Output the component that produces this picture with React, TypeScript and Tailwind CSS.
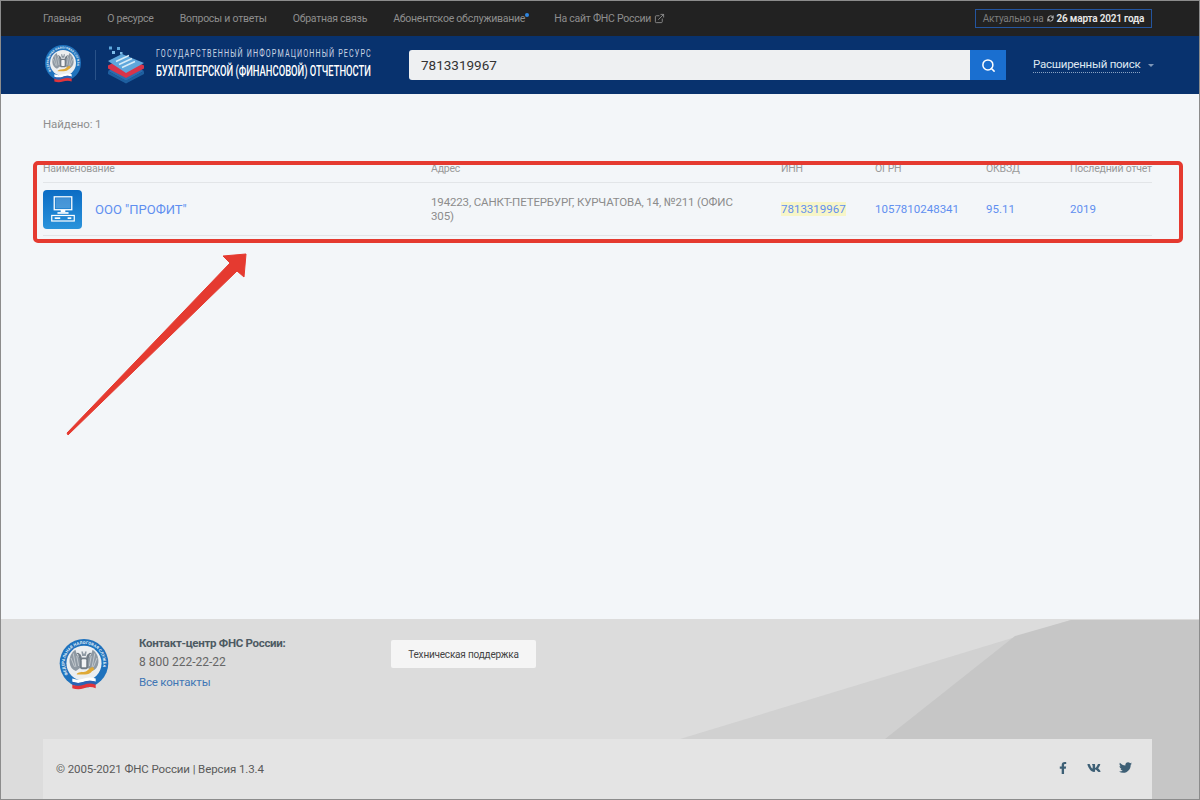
import React from "react";
import { ExternalLink, RefreshCw, Search } from "lucide-react";
import { FaFacebookF, FaTwitter, FaVk } from "react-icons/fa";

const NAV = ["Главная", "О ресурсе", "Вопросы и ответы", "Обратная связь"];

function Emblem({ size, id }: { size: number; id: string }) {
  return (
    <svg width={size} height={size} viewBox="0 0 60 60">
      <circle cx="30" cy="27" r="27" fill="#1f72bd" />
      <circle cx="30" cy="27" r="19.5" fill="#eceef0" />
      <path id={id} d="M12.4 39.3A21.5 21.5 0 1 1 47.6 39.3" fill="none" />
      <text fontFamily="Roboto, sans-serif" fontSize="4.4" fontWeight="700" fill="#e8f2fa" letterSpacing="0.2">
        <textPath href={`#${id}`}>ФЕДЕРАЛЬНАЯ НАЛОГОВАЯ СЛУЖБА</textPath>
      </text>
      {/* eagle */}
      <path d="M27 24C24 20 22 18 20.5 12C16 15 13.5 20 14 26C14.5 31 17 34 21 35.5L26 32Z" fill="#8f99a3" />
      <path d="M33 24C36 20 38 18 39.5 12C44 15 46.5 20 46 26C45.5 31 43 34 39 35.5L34 32Z" fill="#8f99a3" />
      <path d="M18 16l3 15M15.5 21l4 10M22 19l2 11M42 16l-3 15M44.5 21l-4 10M38 19l-2 11" stroke="#dfe2e5" strokeWidth="0.7" />
      <path d="M27.5 22c0-3-1-5-2.5-5.5-1-1.500-2.500-1.500-3.500 0l2 .5c0 2 1 4 2 6zM32.500 22c0-3 1-5 2.500-5.500 1-1.500 2.500-1.500 3.500 0l-2 .5c0 2-1 4-2 6z" fill="#737d87" />
      <path d="M27 14h2v2h2v-2h2l-1 5h-4z" fill="#8f99a3" />
      <rect x="25.500" y="20.500" width="9" height="13" rx="2" fill="#737d87" />
      <rect x="27.500" y="22.500" width="5" height="9" rx="1" fill="#f2f3f5" />
      <path d="M22 38.500c3-2.500 7-1.500 10-2.500 3-1.500 5-5 8-5l1.500 3c-2.500 1-3 3.500-6 4.500-3 1.200-9 1-13.500 1z" fill="#dfa937" />
      <path d="M17 44q6.500 2.500 13 0t13 0v3.500q-6.500-2.500-13 0t-13 0z" fill="#ffffff" />
      <path d="M17 47.500q6.500 2.500 13 0t13 0v3.200q-6.500-2.500-13 0t-13 0z" fill="#2c62b4" />
      <path d="M17 50.700q6.500 2.500 13 0t13 0v4q-6.500-2.500-13 0t-13 0z" fill="#e2343a" />
    </svg>
  );
}

function StackLogo() {
  return (
    <svg width="38" height="38" viewBox="0 0 38 38">
      <path d="M1 25l18-9 18 9-18 10z" fill="#2b6cae" />
      <path d="M1 28l18 9.500 18-9.500v-3l-18 9.500-18-9.500z" fill="#1e5f9f" />
      <path d="M1 19.500l18-9 18 9v3l-18 9.500-18-9.500z" fill="#d8344a" />
      <path d="M1 15l14-7 22 9-18 10z" fill="#5ea7dc" />
      <path d="M9 15.500l13-6M12 18.500l13-6M15 21.500l13-6" stroke="#d6ecf8" strokeWidth="1.400" />
      <rect x="2" y="0.500" width="3" height="3" fill="#5ea7dc" />
      <rect x="10" y="1" width="3" height="3" fill="#5ea7dc" />
      <rect x="5" y="5" width="3" height="3" fill="#7dbbe8" />
      <rect x="13" y="6" width="2.500" height="2.500" fill="#7dbbe8" />
    </svg>
  );
}

function ComputerIcon() {
  return (
    <div className="flex h-[39px] w-[39px] items-center justify-center rounded bg-gradient-to-b from-[#0b6cc4] to-[#2a93db]">
      <svg width="24" height="26" viewBox="0 0 26 28" fill="none">
        <rect x="3.500" y="0.800" width="19" height="14" stroke="#fff" strokeWidth="1.400" />
        <rect x="5" y="2.200" width="16" height="11" fill="#d7ecfa" fillOpacity="0.25" />
        <rect x="10.500" y="15" width="5" height="2.400" fill="#fff" />
        <rect x="7" y="17.400" width="12" height="1.800" fill="#fff" />
        <rect x="0.800" y="21" width="24.400" height="6" stroke="#fff" strokeWidth="1.300" />
        <rect x="4" y="23" width="6" height="1.800" fill="#fff" />
        <rect x="18" y="23" width="4" height="1.800" fill="#fff" />
      </svg>
    </div>
  );
}

function Annotation() {
  return (
    <>
      <div className="absolute left-[33px] top-[161px] h-[82px] w-[1150px] rounded-[5px] border-4 border-[#e53a30]" />
      <svg className="absolute left-0 top-0" width="1200" height="800" viewBox="0 0 1200 800" fill="none">
        <path d="M67 433L230 263L223 256L246 254L244 277L237 271L68 435Z" fill="#e53a30" stroke="#e53a30" strokeWidth="1" strokeLinejoin="round" />
      </svg>
    </>
  );
}

export default function App() {
  return (
    <div className="relative flex h-[800px] w-[1200px] flex-col overflow-hidden border border-[#8c8c8c] bg-[#f3f6f9] font-['Roboto',sans-serif] text-[11.5px]">
      {/* top bar */}
      <div className="flex h-[35px] shrink-0 items-center justify-between bg-[#222222] pl-[42px] pr-[47px] text-[10.5px] tracking-[-0.25px] text-[#8e8e8e]">
        <div className="flex items-center gap-[26px]">
          {NAV.map((item) => (
            <span key={item}>{item}</span>
          ))}
          <span className="relative">
            Абонентское обслуживание
            <span className="absolute -right-[4px] top-[2px] h-[4px] w-[4px] rounded-full bg-[#2f86e0]" />
          </span>
          <span className="ml-[3px] flex items-center gap-[3px]">
            На сайт ФНС России
            <ExternalLink size={11} />
          </span>
        </div>
        <div className="flex h-[19px] w-[177px] items-center justify-center gap-[3px] whitespace-nowrap border border-[#24559f] text-[10px] tracking-[-0.2px]">
          <span className="text-[#7d7d7d]">Актуально на</span>
          <RefreshCw size={7} className="text-[#cfcfcf]" strokeWidth={3} />
          <span className="font-semibold text-[#e8e8e8]">26 марта 2021 года</span>
        </div>
      </div>

      {/* header */}
      <div className="flex h-[58px] shrink-0 items-center bg-[#08326e] pl-[42px]">
        <Emblem size={40} id="emblem-top" />
        <div className="ml-[12px] h-[30px] w-px bg-[#2a5288]" />
        <div className="ml-[11px]">
          <StackLogo />
        </div>
        <div className="mb-[3px] ml-[11px] flex w-[216px] flex-col text-white">
          <span className="origin-left scale-x-[0.65] whitespace-nowrap text-[11px] leading-[12px] tracking-[1.73px] text-[#c8d4e4]">ГОСУДАРСТВЕННЫЙ ИНФОРМАЦИОННЫЙ РЕСУРС</span>
          <span className="mt-[3px] origin-left scale-x-[0.672] whitespace-nowrap text-[14px] font-medium leading-[17px]">БУХГАЛТЕРСКОЙ (ФИНАНСОВОЙ) ОТЧЕТНОСТИ</span>
        </div>
        <div className="ml-[37px] flex h-[30px] w-[597px]">
          <div className="flex flex-1 items-center rounded-l-[3px] bg-[#eef0f2] pl-[12px] text-[13.5px] text-[#333333]">7813319967</div>
          <div className="flex w-[36px] items-center justify-center bg-[#1a6fd0]">
            <Search size={15} className="text-white" strokeWidth={2.4} />
          </div>
        </div>
        <div className="ml-[27px] flex items-center gap-[8px] text-[11.5px] tracking-[-0.25px] text-[#dfe8f2]">
          <span className="border-b border-dotted border-[#8aa3c2] leading-[15px]">Расширенный поиск</span>
          <span className="h-0 w-0 border-x-[3px] border-t-[3px] border-x-transparent border-t-[#7f97b8]" />
        </div>
      </div>

      {/* results */}
      <main className="flex-1 pl-[42px] pr-[47px]">
        <p className="mt-[22px] tracking-[-0.1px] text-[#8f8f8f]">Найдено: 1</p>
        <div className="mt-[29px] grid grid-cols-[388px_350px_94px_111px_84px_1fr] border-b border-[#e2e5e8] pb-[6px] text-[10.5px] leading-[14px] tracking-[-0.2px] text-[#9a9a9a]">
          <span>Наименование</span>
          <span>Адрес</span>
          <span>ИНН</span>
          <span>ОГРН</span>
          <span>ОКВЗД</span>
          <span className="whitespace-nowrap">Последний отчет</span>
        </div>
        <div className="grid h-[53px] grid-cols-[388px_350px_94px_111px_84px_1fr] items-center border-b border-[#e2e5e8] text-[#5f8ff0]">
          <div className="flex items-center gap-[13px]">
            <ComputerIcon />
            <span className="text-[13px]">ООО "ПРОФИТ"</span>
          </div>
          <span className="pr-[40px] leading-[14px] tracking-[-0.15px] text-[#8c8c8c]">194223, САНКТ-ПЕТЕРБУРГ, КУРЧАТОВА, 14, №211 (ОФИС 305)</span>
          <span><span className="bg-[#f7f5c8]">7813319967</span></span>
          <span>1057810248341</span>
          <span>95.11</span>
          <span>2019</span>
        </div>
      </main>

      {/* footer */}
      <footer className="relative h-[180px] shrink-0 bg-[#dcdcdc]">
        <svg className="absolute left-[-1px] top-[-619px]" width="1200" height="800" viewBox="0 0 1200 800" fill="none">
          <path d="M680 739L1071 620H1200V800H680Z" fill="#d1d1d1" />
          <path d="M885 739L1015 636L1071 620H1200V800H885Z" fill="#c6c6c6" />
        </svg>
        <div className="relative flex h-[120px] pl-[56px] pt-[20px]">
          <Emblem size={54} id="emblem-footer" />
          <div className="-mt-[5px] ml-[28px] w-[252px] leading-[19px] text-[#666666]">
            <p className="font-bold tracking-[-0.3px] text-[#4d5a63]">Контакт-центр ФНС России:</p>
            <p className="text-[12px]">8 800 222-22-22</p>
            <p className="mt-[1px] tracking-[-0.2px] text-[#3f76b5]">Все контакты</p>
          </div>
          <div className="mt-[1px] flex h-[28px] w-[145px] items-center justify-center rounded-[2px] bg-[#f5f5f5] text-[10px] tracking-[-0.2px] text-[#444444]">Техническая поддержка</div>
        </div>
        <div className="relative ml-[42px] flex h-[60px] w-[1109px] items-center justify-between bg-[#e4e4e4] pl-[13px] pr-[20px] tracking-[-0.1px] text-[#5a5a5a]">
          <span className="mt-[1px]">© 2005-2021 ФНС России | Версия 1.3.4</span>
          <div className="-mt-[3px] flex items-center gap-[18px] text-[#3d5f75]">
            <FaFacebookF size={12} />
            <FaVk size={14} />
            <FaTwitter size={13} />
          </div>
        </div>
      </footer>

      <div className="absolute left-[-1px] top-[-1px]">
        <Annotation />
      </div>
    </div>
  );
}
